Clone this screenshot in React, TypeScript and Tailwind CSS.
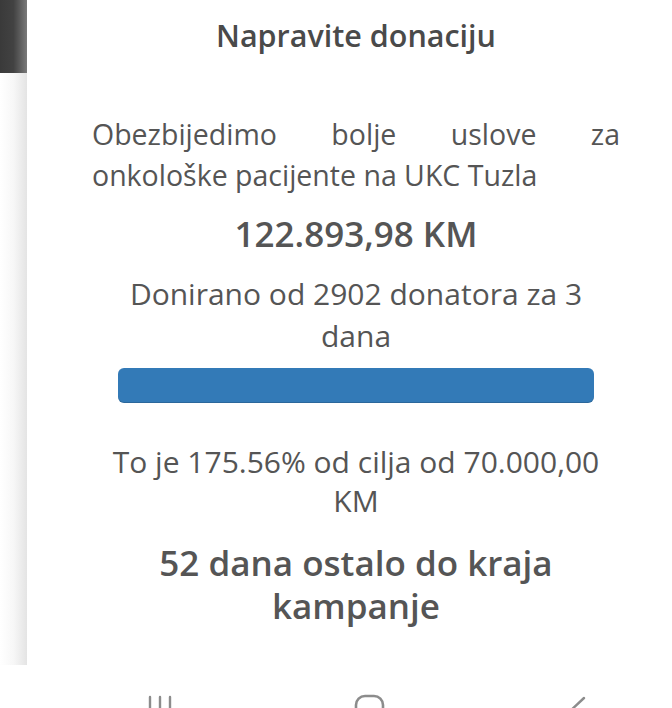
export default function App() {
  return (
    <div className="w-[672px] h-[708px] bg-white flex flex-col overflow-hidden">
      <div className="flex h-[665px]">
        {/* left edge strip */}
        <div className="w-[27px] flex flex-col shrink-0">
          <div className="h-[73px] bg-gradient-to-r from-[#3a3a3a] via-[#424242] to-[#7a7a7a]" />
          <div className="flex-1 bg-gradient-to-r from-white via-[#f7f7f7] to-[#e4e4e4]" />
        </div>

        {/* donation card */}
        <div className="flex-1 pl-[65px] pr-[52px] flex flex-col items-center text-[#555] font-['Open_Sans',sans-serif]">
          <h2 className="mt-[15px] text-[30.5px] leading-[40px] font-semibold text-[#4a4a4a]">
            Napravite donaciju
          </h2>

          <p className="mt-[59px] w-full text-[28.5px] leading-[41px]">
            <span className="block text-justify [text-align-last:justify]">Obezbijedimo bolje uslove za</span>
            <span className="block">onkološke pacijente na UKC Tuzla</span>
          </p>

          <div className="mt-[16px] text-[35px] leading-[44px] font-semibold">
            122.893,98 KM
          </div>

          <p className="mt-[17px] px-[20px] text-center text-[30px] leading-[42px]">
            Donirano od 2902 donatora za 3 dana
          </p>

          <div className="mt-[11px] w-[476px] h-[35px] rounded-[6px] bg-[#337ab7] shadow-[inset_0_-1px_0_rgba(0,0,0,0.15)]" />

          <p className="mt-[39px] text-center text-[30px] leading-[39px]">
            To je 175.56% od cilja od 70.000,00 KM
          </p>

          <div className="mt-[21px] px-[20px] text-center text-[35px] leading-[43px] font-semibold">
            52 dana ostalo do kraja kampanje
          </div>
        </div>
      </div>

      {/* system navigation bar */}
      <div className="relative flex-1 bg-white">
        <svg className="absolute left-[146px] top-[30px]" width="30" height="20" viewBox="0 0 30 20">
          <g stroke="#8c8c8c" strokeWidth="2.4" strokeLinecap="round">
            <line x1="4" y1="2" x2="4" y2="20" />
            <line x1="14" y1="2" x2="14" y2="20" />
            <line x1="24" y1="2" x2="24" y2="20" />
          </g>
        </svg>
        <svg className="absolute left-[354px] top-[29px]" width="32" height="20" viewBox="0 0 32 20">
          <rect x="2" y="2" width="27" height="27" rx="9" fill="none" stroke="#8c8c8c" strokeWidth="2.6" />
        </svg>
        <svg className="absolute left-[564px] top-[31px]" width="24" height="20" viewBox="0 0 24 20">
          <polyline points="20,2 4,17 8,20" fill="none" stroke="#8c8c8c" strokeWidth="2.4" strokeLinecap="round" />
        </svg>
      </div>
    </div>
  );
}
